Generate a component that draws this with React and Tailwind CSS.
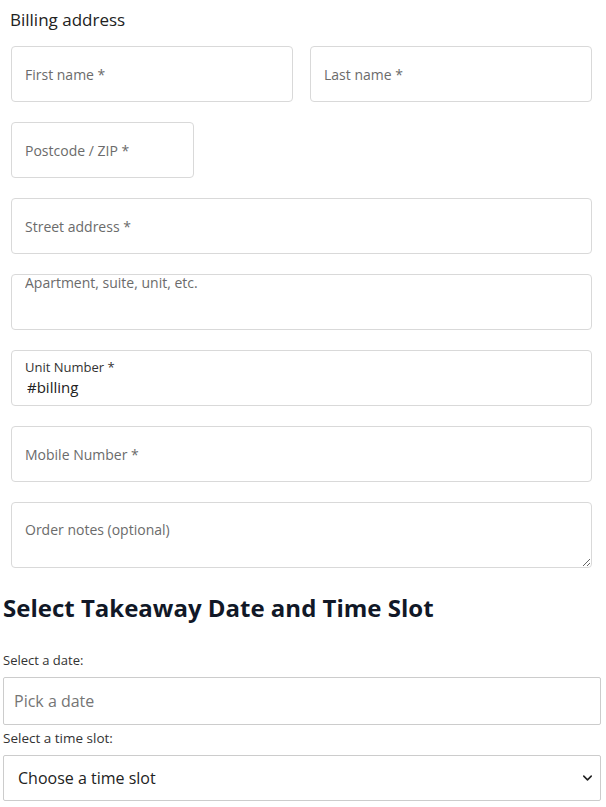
import { ChevronDown } from "lucide-react";

const box =
  "w-full h-[56px] rounded-[4px] border border-[#d9d9d9] bg-white px-[13px] text-[14px] text-[#333] outline-none placeholder:text-[#6b6b6b]";

function Field({ placeholder, className = "" }) {
  return <input type="text" placeholder={placeholder} className={`${box} ${className}`} />;
}

export default function App() {
  return (
    <div className="w-[606px] bg-white font-['Open_Sans',sans-serif] text-[#222]">
      <div className="pl-[11px] pr-[14px]">
        <h3 className="-ml-px pt-[8px] text-[17px] leading-[24px]">Billing address</h3>

        <div className="mt-[14px] flex flex-col gap-[20px]">
          <div className="flex gap-[17px]">
            <Field placeholder="First name *" />
            <Field placeholder="Last name *" />
          </div>
          <Field placeholder="Postcode / ZIP *" className="!w-[183px]" />
          <Field placeholder="Street address *" />
          <input
            type="text"
            placeholder="Apartment, suite, unit, etc."
            className={`${box} pb-[40px] pt-0`}
          />
          <div className="flex h-[56px] flex-col justify-center rounded-[4px] border border-[#d9d9d9] px-[13px]">
            <label className="text-[13px] leading-[17px] text-[#333]">Unit Number *</label>
            <input
              type="text"
              defaultValue="#billing"
              className="px-[2px] text-[15px] leading-[22px] text-[#222] outline-none"
            />
          </div>
          <Field placeholder="Mobile Number *" />
          <textarea
            placeholder="Order notes (optional)"
            className="block h-[66px] w-full rounded-[4px] border border-[#d9d9d9] px-[13px] pt-[17px] text-[14px] leading-[20px] outline-none placeholder:text-[#6b6b6b]"
          />
        </div>
      </div>

      <div className="px-[3px] pb-[6px]">
        <h2 className="mt-[24px] text-[24px] font-bold leading-[32px] text-[#111827]">
          Select Takeaway Date and Time Slot
        </h2>

        <label className="mt-[26px] block text-[13px] leading-[20px] text-[#333]">Select a date:</label>
        <input
          type="text"
          placeholder="Pick a date"
          className="mt-[7px] block h-[48px] w-[598px] rounded-[2px] border border-[#ccc] px-[10px] text-[16px] outline-none placeholder:text-[#757575]"
        />

        <label className="mt-[3px] block text-[13.5px] leading-[20px] text-[#333]">Select a time slot:</label>
        <div className="relative mt-[7px] w-[598px]">
          <select className="block h-[46px] w-full appearance-none rounded-[2px] border border-[#ccc] bg-white px-[14px] text-[16px] text-[#222] outline-none">
            <option>Choose a time slot</option>
          </select>
          <ChevronDown
            size={15}
            strokeWidth={2.5}
            className="pointer-events-none absolute right-[6px] top-1/2 -translate-y-1/2 text-[#222]"
          />
        </div>
      </div>
    </div>
  );
}
